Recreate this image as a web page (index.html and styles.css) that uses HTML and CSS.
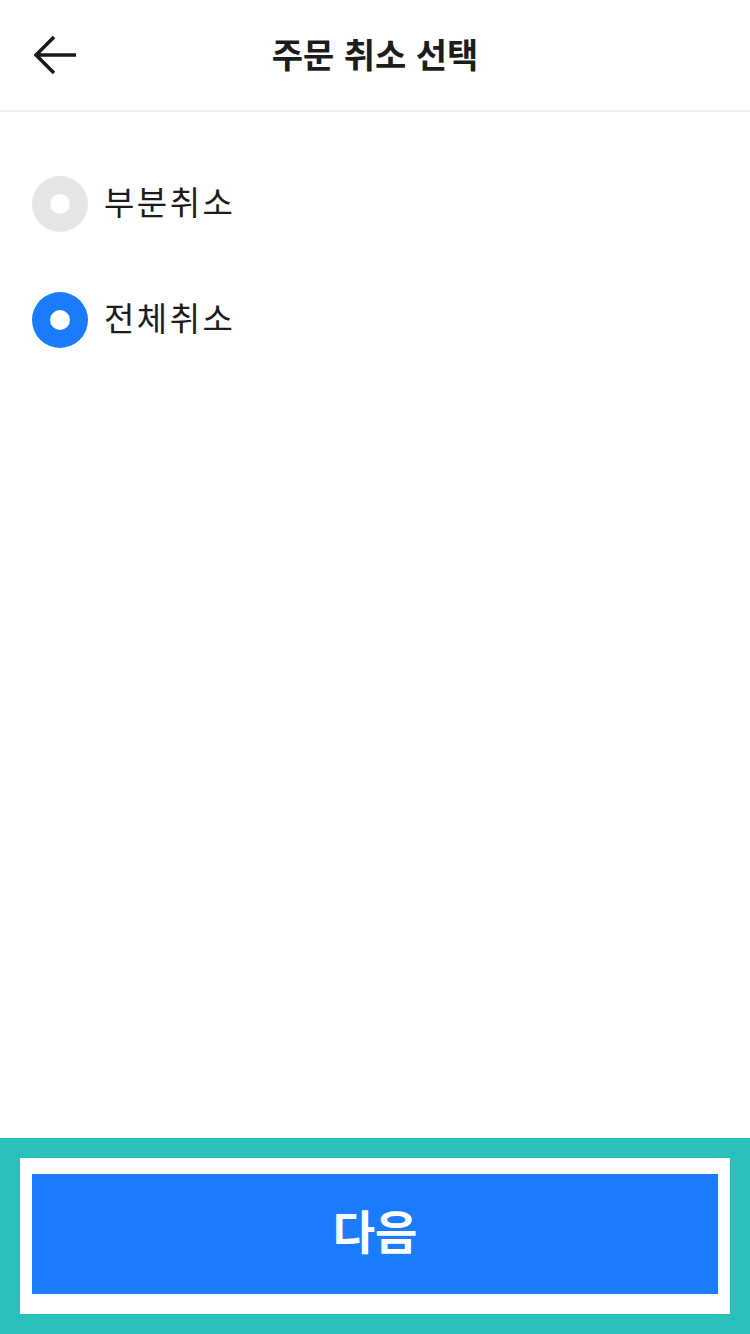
FILE: index.html
```html
<!DOCTYPE html>
<html lang="ko">
<head>
  <meta charset="UTF-8">
  <meta name="viewport" content="width=device-width, initial-scale=1.0">
  <link rel="stylesheet" href="styles.css">
  <title>주문 취소 선택</title>
</head>
<body>
  <header class="top-bar">
    <button class="back-button" aria-label="뒤로">
      <svg width="44" height="40" viewBox="0 0 44 40">
        <path d="M20 2 L2 20 L20 38 M2 20 H42" fill="none" stroke="#1a1a1a" stroke-width="3.6"/>
      </svg>
    </button>
    <h1>주문 취소 선택</h1>
  </header>

  <main class="options">
    <label class="option">
      <input type="radio" name="cancelType" value="partial">
      <span class="radio-mark"></span>
      <span class="option-text">부분취소</span>
    </label>
    <label class="option">
      <input type="radio" name="cancelType" value="all" checked>
      <span class="radio-mark"></span>
      <span class="option-text">전체취소</span>
    </label>
  </main>

  <footer class="bottom-area">
    <div class="button-frame">
      <button class="next-button">다음</button>
    </div>
  </footer>
</body>
</html>
```

FILE: styles.css
```css
:root {
  --color-text: #1c1c1c;
  --color-blue: #1b7cff;
  --color-grey-radio: #e5e6e8;
  --color-line: #f0f0f0;
  --color-teal: #2bc1bb;
  --color-white: #ffffff;
}

* {
  margin: 0;
  padding: 0;
  box-sizing: border-box;
}

html, body {
  height: 100%;
}

body {
  display: flex;
  flex-direction: column;
  font-family: "Noto Sans CJK KR", "Noto Sans", sans-serif;
  color: var(--color-text);
  background-color: var(--color-white);
}

.top-bar {
  position: relative;
  display: flex;
  align-items: center;
  justify-content: center;
  height: 112px;
  border-bottom: 2px solid var(--color-line);
}

.top-bar h1 {
  font-size: 34px;
  font-weight: 700;
  line-height: 1;
  margin-top: -2px;
}

/* back arrow sits over the bar, left side */
.back-button {
  position: absolute;
  left: 34px;
  top: 35px;
  display: flex;
  border: none;
  background: none;
  cursor: pointer;
}

.options {
  flex: 1;
  display: flex;
  flex-direction: column;
  gap: 60px;
  padding: 64px 32px 0;
}

.option {
  display: flex;
  align-items: center;
  gap: 16px;
  height: 56px;
  cursor: pointer;
}

.option input {
  display: none;
}

.radio-mark {
  flex: none;
  width: 56px;
  height: 56px;
  border-radius: 50%;
  background-color: var(--color-grey-radio);
  display: flex;
  align-items: center;
  justify-content: center;
}

.radio-mark::after {
  content: "";
  width: 20px;
  height: 20px;
  border-radius: 50%;
  background-color: var(--color-white);
}

.option input:checked + .radio-mark {
  background-color: var(--color-blue);
}

.option-text {
  font-size: 33px;
  letter-spacing: 2.5px;
  line-height: 1;
  margin-bottom: 5px;
}

.bottom-area {
  background-color: var(--color-teal);
  padding: 20px;
}

.button-frame {
  background-color: var(--color-white);
  padding: 16px 12px 20px;
}

.next-button {
  display: block;
  width: 100%;
  height: 120px;
  border: none;
  background-color: var(--color-blue);
  color: var(--color-white);
  font-family: inherit;
  font-size: 46px;
  font-weight: 700;
  padding-bottom: 10px;
  cursor: pointer;
}
```
